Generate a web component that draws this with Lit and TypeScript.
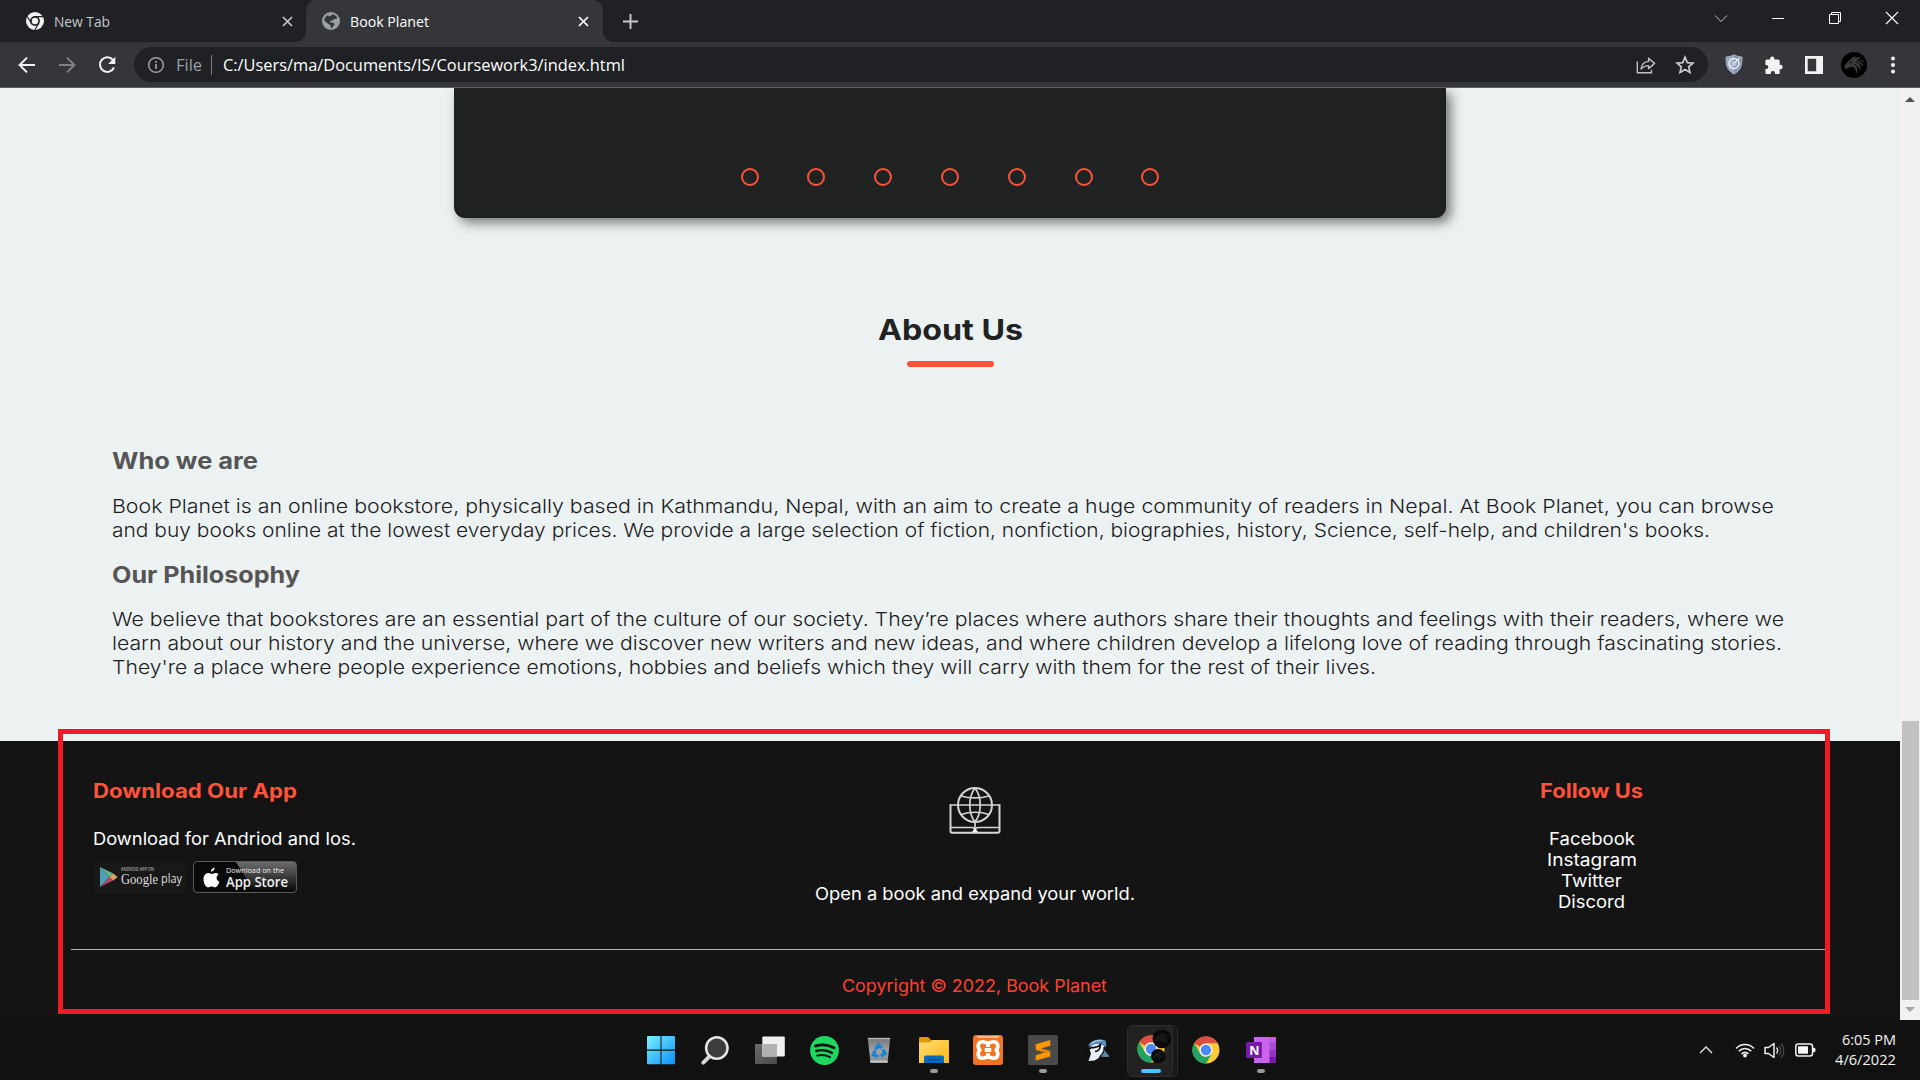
import { LitElement, html, svg, css, type TemplateResult } from "lit";
import { customElement, property, query } from "lit/decorators.js";

/** A single line of text stretched or condensed to an exact width. */
@customElement("fit-text")
class FitText extends LitElement {
  @property({ type: Number }) w = 100;
  @query(".line") line!: HTMLSpanElement;

  static styles = css`
    :host { display: block; white-space: nowrap; }
    .line { display: inline-block; transform-origin: 0 50%; }
  `;

  firstUpdated() {
    const natural = this.line.getBoundingClientRect().width;
    this.style.width = `${this.w}px`;
    if (natural > 0) this.line.style.transform = `scaleX(${this.w / natural})`;
  }

  render() {
    return html`<span class="line"><slot></slot></span>`;
  }
}

const icon = (w: number, h: number, body: TemplateResult) =>
  html`<svg class="icon" width=${w} height=${h} viewBox="0 0 ${w} ${h}" fill="none">${body}</svg>`;

const cross = (color: string) => icon(11, 11, svg`<path d="M1 1l9 9M10 1l-9 9" stroke=${color} stroke-width="1.7"/>`);

const chromeMono = icon(18, 18, svg`
  <circle cx="9" cy="9" r="9" fill="#f1f3f4"/>
  <circle cx="9" cy="9" r="4.900" fill="#202124"/><circle cx="9" cy="9" r="3.200" fill="#f1f3f4"/>
  <path d="M9 4.700h8.500M5.300 11.200L1.300 4.500M12.700 11.200L8.900 17.700" stroke="#202124" stroke-width="1.200"/>`);

const globeIcon = icon(18, 18, svg`
  <circle cx="9" cy="9" r="9" fill="#9aa0a6"/>
  <path d="M10.500 2.300c2 .3 3.900 1.600 4.900 3.600-.6.900-1.700 1-2.700 1-1.300 0-1.300 1.100-2.300 1.600-.9.400-2.400.2-2.600 1.200-.2.900.8.900 2 .9 1.600 0 2.700.8 2.700 2 0 1.300-1.700 1.400-1.900 2.400-.2.900-.9 1.300-1.800 1.300.2-1.200.1-2-.4-2.900-.5-.9-1.700-1.100-2.700-1.900L2.200 8.500C2.500 6 4 4 6 2.900c.3.900.9 1.500 1.900 1.400 1.200-.1 1.400-1.500 2.600-2z" fill="#35363a"/>`);

const backIcon = icon(20, 20, svg`<path d="M18 10H3M10 2.600L2.600 10l7.400 7.400" stroke="#f1f3f4" stroke-width="2"/>`);
const forwardIcon = icon(20, 20, svg`<path d="M2 10h15M10 2.600l7.400 7.400-7.400 7.400" stroke="#808185" stroke-width="2"/>`);
const reloadIcon = icon(20, 20, svg`
  <path d="M16.200 5.300A7.300 7.300 0 1 0 17 12.500" stroke="#f1f3f4" stroke-width="2"/>
  <path d="M18.300 1.700v7.200h-7.200z" fill="#f1f3f4"/>`);
const infoIcon = icon(18, 18, svg`
  <circle cx="9" cy="9" r="7.300" stroke="#9aa0a6" stroke-width="1.500"/>
  <path d="M9 8v5M9 5v1.700" stroke="#9aa0a6" stroke-width="1.700"/>`);
const shareIcon = icon(20, 18, svg`
  <path d="M1.300 5.500v11.300h14.200v-3" stroke="#bdc1c6" stroke-width="1.400"/>
  <path d="M5 13c.6-4.800 3.400-7.400 7.600-7.600V2.200l6 5.200-6 5.200V9.600c-3.200 0-5.400 1-7.600 3.400z" stroke="#bdc1c6" stroke-width="1.400" stroke-linejoin="round"/>`);
const starIcon = icon(20, 20, svg`
  <path d="M10 2.200l2.300 5.400 5.700.5-4.300 3.800 1.300 5.700-5-3-5 3 1.300-5.700L2 8.100l5.700-.5z" stroke="#c7cace" stroke-width="1.700"/>`);
const shieldIcon = icon(18, 21, svg`
  <path d="M9 .8c2.400 1.400 5 2 8 2.200 0 8-1 13.400-8 17C2 16.400 1 11 1 3c3-.2 5.600-.8 8-2.200z" fill="#8794ae" stroke="#aab4c6"/>
  <path d="M9 1.500V19C3 16 2 11 2 4c2.700-.2 5-1 7-2.500z" fill="#a3aec2"/>
  <circle cx="9" cy="9.500" r="4.900" stroke="#e9edf3" stroke-width="1.500"/><circle cx="9" cy="9.500" r="2.600" fill="#b9c4d6"/>
  <path d="M9.500 9l5-5" stroke="#e9edf3" stroke-width="1.300"/>`);
const puzzleIcon = icon(20, 20, svg`
  <path d="M8.200 1.500a2.200 2.200 0 0 1 2.200 2.200v.9h3.800a1.500 1.500 0 0 1 1.500 1.500v3.600h.7a2.250 2.250 0 0 1 0 4.500h-.7V18a1 1 0 0 1-1 1h-3.700v-.9a2.100 2.100 0 0 0-4.200 0v.9H2.600a1.200 1.200 0 0 1-1.200-1.200v-3.700h.8a2.100 2.100 0 0 0 0-4.200h-.8V6.100a1.500 1.500 0 0 1 1.500-1.500h3.200v-.9a2.200 2.200 0 0 1 2.100-2.200z" fill="#f1f3f4"/>`);
const panelIcon = icon(18, 18, svg`<path d="M0 0h18v18H0zM2.700 2.700v12.600h8.500V2.700z" fill="#f1f3f4" fill-rule="evenodd"/>`);

const dragon = (bg: string, ink: string) => svg`
  <circle cx="13" cy="13" r="13" fill=${bg}/>
  <path d="M3.500 13.500c2-1.300 3-4.300 5.500-5.800 1.700-1.200 3.200-3.300 6.500-3.700-1 1-1.600 1.600-1.700 2.300 2.500-1.300 5-1.500 7.200-.3-2-.1-3.600.5-4.700 1.600 2.900-.5 5.400.3 7 2.400-2-.8-4-.9-5.600-.2 2.600.6 4.600 2.500 5.300 5-1.500-1.500-3-2.500-5-2.600 1.500 1.600 2.400 4 1.900 6.600-.7-2-1.900-3.600-3.400-4.300.6 2.300.2 5.100-1.500 7.300.2-2.500-.4-4.600-1.900-6.100-1.100-1-2.900-1.300-4.500-.3L5.500 17l-2-1z" fill=${ink}/>
  <path d="M8.500 10.700l3-.7M13 12c2 1 3.500 2.600 4 5M15 9.500c2 .7 3.600 2 4.500 4M16 7.800l4 1.200" stroke=${bg} stroke-width=".9"/>`;
const avatarIcon = icon(26, 26, dragon("#000", "#3a3b3c"));
const dotsIcon = icon(6, 18, svg`<g fill="#f1f3f4"><circle cx="3" cy="2.500" r="2"/><circle cx="3" cy="9" r="2"/><circle cx="3" cy="15.500" r="2"/></g>`);

const bookGlobe = icon(52, 47, svg`
  <g stroke="#d6d3d1" stroke-width="1.700">
    <circle cx="26" cy="18" r="17" stroke-width="2"/>
    <path d="M26 35v9M1.500 18h49M12.200 9c8 2.500 19.600 2.500 27.600 0M12.200 27.500c8-3 19.600-3 27.600 0"/>
    <path d="M26 1c-7 9-7 25 0 34M26 1c7 9 7 25 0 34"/>
    <path d="M1.500 17.200V44c0 1 .8 1.800 1.800 1.800h45.400c1 0 1.800-.8 1.800-1.800V17.200" stroke-width="2"/>
    <path d="M2 40.500h20.500c2 0 3.500 1 3.500 3 0-2 1.500-3 3.500-3H50"/>
  </g><path d="M23 45h6l-3-4z" fill="#fff"/>`);

const playBadge = icon(18, 22, svg`
  <path d="M0 1v20L9.500 11z" fill="#4d9fb5"/><path d="M0 1l9.500 10 3.800-3.600z" fill="#67b68a"/>
  <path d="M0 21l9.500-10 3.800 3.600z" fill="#b04a63"/><path d="M13.300 7.400L9.500 11l3.800 3.600L17.600 11z" fill="#e0a060"/>`);
const appleIcon = icon(17, 21, svg`
  <path d="M11.600.5c.1 2.200-1.600 4.200-3.600 4.200C7.800 2.700 9.700.7 11.600.5zM15.600 7.400c-3 1.800-2.500 6 .9 7.300-.9 2.600-2.700 5.600-4.500 5.600-1.300 0-1.900-.8-3.400-.8s-2.200.8-3.400.8C2.700 20.300.5 16 .5 12.200c0-3.700 2.300-6.200 4.900-6.200 1.500 0 2.500.9 3.500.9 1 0 2.200-1 4-1 1.100 0 2.100.6 2.700 1.500z" fill="#fff"/>`);

const chromeColor = () => svg`
  <g>
    <circle cx="14" cy="14" r="13.500" fill="#fbc933"/>
    <path d="M2.300 7.250A13.500 13.500 0 0 1 25.700 7.250H14a6.750 6.750 0 0 0-5.850 3.400z" fill="#dd4f43"/>
    <path d="M2.300 7.250L8.150 17.400A6.750 6.750 0 0 0 14 20.750l5.850-3.350L14 27.500A13.500 13.500 0 0 1 2.300 7.250z" fill="#1fa463"/>
    <circle cx="14" cy="14" r="6.600" fill="#f5f6f7"/><circle cx="14" cy="14" r="5.200" fill="#4a8af4"/>
  </g>`;

const windowsIcon = icon(28, 28, svg`
  <defs><linearGradient id="wg" x1="0" y1="0" x2="28" y2="28" gradientUnits="userSpaceOnUse"><stop stop-color="#7cefff"/><stop offset="1" stop-color="#0a92f8"/></linearGradient></defs>
  <path d="M1 0h12.500v13.500H0V1a1 1 0 0 1 1-1zM14.500 0H27a1 1 0 0 1 1 1v12.500H14.500zM0 14.800h13.500V28.300H1a1 1 0 0 1-1-1zM14.500 14.800H28v12.500a1 1 0 0 1-1 1H14.500z" fill="url(#wg)"/>`);
const searchIcon = icon(28, 29, svg`
  <path d="M2.300 26.700l7-7" stroke="#d5d7da" stroke-width="4" stroke-linecap="round"/>
  <circle cx="15.800" cy="12" r="10.700" fill="#3b3c3e" stroke="#e4e5e7" stroke-width="2.500"/>`);
const taskViewIcon = icon(30, 28, svg`
  <defs><linearGradient id="tg" x1="0" y1="0" x2="1" y2="1"><stop stop-color="#6b6b6b"/><stop offset="1" stop-color="#494949"/></linearGradient></defs>
  <rect x="0" y="8" width="22" height="20" rx="1" fill="url(#tg)"/><rect x="7.300" y=".5" width="22.500" height="20" rx="1" fill="#f0f0f0"/>
  <path d="M7.300 8H22v12.500H7.300z" fill="#b2b2b2"/>`);
const spotifyIcon = icon(29, 29, svg`
  <circle cx="14.500" cy="14.500" r="14.400" fill="#1ed760"/>
  <g stroke="#121212" stroke-linecap="round"><path d="M5.500 10c6-1.800 13-1.200 18.500 1.800" stroke-width="2.900"/><path d="M6.300 15c5-1.500 11-.8 15.600 1.900" stroke-width="2.400"/><path d="M7 19.600c4.500-1.200 9-.7 13 1.600" stroke-width="2"/></g>`);
const binIcon = icon(24, 27, svg`
  <defs><linearGradient id="bg" x1="0" y1="0" x2="0" y2="1"><stop stop-color="#77797c"/><stop offset=".5" stop-color="#a0a3a7"/><stop offset="1" stop-color="#85888c"/></linearGradient></defs>
  <path d="M.8 1.500h22.400L20.500 26H3.500z" fill="url(#bg)"/><path d="M.8 1.500h22.400" stroke="#b9bcbf" stroke-width="1.300"/><path d="M3.300 24.500h17.400" stroke="#c4c7ca" stroke-width="2"/>
  <g stroke="#1585d8" stroke-width="3.400"><path d="M8.500 12.500l3-4.500L14.800 11"/><path d="M16 12.500l2 3.700-4 3"/><path d="M11 19.500l-4.500-1.500L8 13.500"/></g>`);
const folderIcon = icon(30, 27, svg`
  <defs><linearGradient id="fg" x1="0" y1="0" x2="1" y2="1"><stop stop-color="#ffdc73"/><stop offset="1" stop-color="#fdb913"/></linearGradient></defs>
  <path d="M0 1.500C0 .7.700 0 1.500 0H9l3.500 3.500V7H0z" fill="#dc9c08"/><path d="M0 5.500h10.500L13 3h16a1 1 0 0 1 1 1v22H0z" fill="url(#fg)"/>
  <path d="M5 26v-5.500c0-1.200.8-2 2-2h16c1.200 0 2 .8 2 2V26z" fill="#0f69b8"/><path d="M9 22.500h12" stroke="#0b4a86" stroke-width="1.300"/>`);
const xamppIcon = icon(30, 30, svg`
  <rect width="30" height="30" rx="3" fill="#f07423"/><path d="M3 1h24l-2 2H5z" fill="#fbb98a"/>
  <path d="M9.500 6.800C12 6.800 13 8 15 8s3-1.200 5.500-1.200c5 0 5.300 5.700 2.600 8.200 2.700 2.500 2.400 8.200-2.600 8.200-2.500 0-3.500-1.200-5.500-1.200s-3 1.200-5.500 1.200c-5 0-5.300-5.700-2.600-8.200-2.700-2.500-2.400-8.200 2.600-8.200z" stroke="#fff" stroke-width="3.600" stroke-linejoin="round"/>
  <path d="M11.700 15h6.600M15 7v5M15 18v5" stroke="#fff" stroke-width="4"/>`);
const sublimeIcon = icon(30, 30, svg`
  <rect width="30" height="30" rx="1.500" fill="#4a4a4a"/>
  <path d="M22.300 5v5.800L13 13.500l9.300 2.600v5.300L7.700 25.500v-5.300l9-2.800-9-2.600V9.300z" fill="#ff9800"/><path d="M7.700 14.800l14.600 1.300v1.600l-5.600-.3z" fill="#d97f00"/>`);
const jayIcon = icon(26, 23, svg`
  <path d="M18 8l7.500 9.500c-3 .8-7 .8-10.500-.5z" fill="#5f86ab"/>
  <path d="M8 4C13 .5 19 2 20 7c.4 5.500-3 11.500-9.500 14.500L4.500 22 7 14.500 5 9z" fill="#e9eef2"/>
  <path d="M4 6.500C7 1.500 14-1 21 1.200c1.500 2 1.500 4.500.5 7.300C19 5 13 4 8 6.500z" fill="#5c8fbd"/>
  <path d="M0 13l7.500-4.500M6 8c4 1.200 7.500.5 10.500-2.500-.3 4.500-2.500 7-5.500 7" stroke="#0c1116" stroke-width="1.700"/>
  <path d="M7 4.500c3-2.500 7-3.500 11-3" stroke="#a5c6e0" stroke-width="1.200"/><path d="M20 8c.5 4-1.500 7.500-4.500 10" stroke="#182838" stroke-width="1.300"/>`);
const chromeActive = icon(34, 30, svg`${chromeColor()}
  <g transform="translate(15.500 -5.500) scale(.72)">${dragon("#080808", "#1b1b1b")}</g>
  <g transform="translate(14 14) scale(.55)">${dragon("#080808", "#1b1b1b")}</g>`);
const chromeIcon = icon(28, 28, chromeColor());
const oneNoteIcon = icon(30, 26, svg`
  <path d="M8 0h22v26H8z" fill="#ca64ea"/><path d="M23.500 0H30v5h-6.500z" fill="#c55ce8"/><path d="M23.500 5H30v8h-6.500z" fill="#ae4bd5"/><path d="M23.500 13H30v7h-6.500z" fill="#9332bf"/><path d="M23.500 20H30v6h-6.500z" fill="#7719aa"/>
  <path d="M8 5h8v16H8z" fill="#8a37b3"/><rect x="0" y="5" width="15.500" height="16" rx="1.200" fill="#7719aa"/>
  <text x="3.200" y="17.700" font-family="Open Sans, sans-serif" font-weight="700" font-size="12.500" fill="#fff">N</text>`);

const chevronUp = icon(14, 8, svg`<path d="M1 7l6-6 6 6" stroke="#e6e6e6" stroke-width="1.400"/>`);
const wifiIcon = icon(20, 16, svg`
  <g stroke="#f0f0f0" stroke-width="1.600"><path d="M1 6.500c5-5.300 13-5.300 18 0"/><path d="M3.800 9.300c3.400-3.700 9-3.700 12.400 0"/><path d="M6.500 12c2-2.200 5-2.200 7 0"/></g><circle cx="10" cy="13.500" r="1.900" fill="#f0f0f0"/>`);
const soundIcon = icon(21, 17, svg`
  <path d="M1 5.500h3.500L10 1.500v14l-5.500-4H1z" stroke="#f0f0f0" stroke-width="1.500" stroke-linejoin="round"/>
  <path d="M12.500 5.500c1.300 1.700 1.300 4.300 0 6" stroke="#f0f0f0" stroke-width="1.300"/>
  <path d="M14.800 3.500c2.400 3 2.400 7 0 10M17.300 1.500c3.300 4 3.300 10 0 14" stroke="#4c4c4c" stroke-width="1.300"/>`);
const batteryIcon = icon(21, 14, svg`
  <rect x=".8" y="1" width="16.700" height="12" rx="2.500" stroke="#f0f0f0" stroke-width="1.500"/><rect x="3" y="3.200" width="10" height="7.600" rx=".8" fill="#f5f5f5"/><path d="M18 4.800h1.200c.8 0 1.300.7 1.300 2.200s-.5 2.200-1.300 2.200H18z" fill="#f0f0f0"/>`);

interface Task { art: TemplateResult; state?: "open" | "active" }
const tasks: Task[] = [
  { art: windowsIcon }, { art: searchIcon }, { art: taskViewIcon }, { art: spotifyIcon }, { art: binIcon },
  { art: folderIcon, state: "open" }, { art: xamppIcon }, { art: sublimeIcon, state: "open" }, { art: jayIcon },
  { art: chromeActive, state: "active" }, { art: chromeIcon }, { art: oneNoteIcon, state: "open" },
];

@customElement("app-root")
class AppRoot extends LitElement {
  static styles = css`
    :host { display: block; width: 1920px; height: 1080px; overflow: hidden; font-family: Inter, "Liberation Sans", sans-serif; }
    * { box-sizing: border-box; }
    h2, h3, h4, p { margin: 0; font: inherit; }
    .icon { display: block; flex: none; overflow: visible; }
    .screen { position: relative; display: flex; flex-direction: column; height: 1080px; }
    .ui { font-family: "Open Sans", "Noto Sans", sans-serif; }

    .tabs { display: flex; height: 42px; background: #202124; font-size: 14.800px; line-height: 20px; }
    .tab { display: flex; align-items: center; height: 42px; color: #c4c7cb; }
    .tab-new { width: 306px; padding: 0 13px 0 26px; }
    .tab-current { position: relative; width: 297px; padding: 0 14px 0 16px; background: #35363a; border-radius: 10px 10px 0 0; color: #fff; }
    .tab-current::before, .tab-current::after { content: ""; position: absolute; bottom: 0; width: 10px; height: 10px; }
    .tab-current::before { left: -10px; background: radial-gradient(circle at 0 0, transparent 9.500px, #35363a 10px); }
    .tab-current::after { right: -10px; background: radial-gradient(circle at 100% 0, transparent 9.500px, #35363a 10px); }
    .tab-title { margin: 0 auto 0 10px; }
    .plus { display: flex; align-items: center; margin-left: 20px; }
    .window { display: flex; align-items: center; height: 36px; margin: 0 22px 0 auto; gap: 45px; }

    .toolbar { display: flex; align-items: center; height: 46px; padding-left: 7px; background: #35363a; border-bottom: 1px solid #5c5d60; }
    .slot { display: flex; align-items: center; justify-content: center; width: 40px; }
    .slot-last { width: 38px; }
    .address { display: flex; align-items: center; width: 1574px; height: 35px; margin: 0 6px 0 7px; padding: 0 13px; border-radius: 18px; background: #202124; color: #fff; font-size: 17px; line-height: 24px; }
    .scheme { margin-left: 10.500px; color: #9aa0a6; }
    .bar { width: 1.500px; height: 20px; margin: 0 11px 0 9px; background: #7b7e82; }
    .address-end { display: flex; align-items: center; gap: 19px; margin-left: auto; }

    .viewport { display: flex; height: 932px; }
    .page { display: flex; flex-direction: column; width: 1900px; background: #ecf2f2; overflow: hidden; }
    .card { display: flex; align-items: flex-end; justify-content: center; gap: 48.800px; width: 992px; height: 130px; flex: none; margin-left: 454px; padding-bottom: 32px; border-radius: 0 0 11px 11px; background: #212322; box-shadow: 5px 5px 12px rgba(0, 0, 0, .5), inset -3px -3px 6px rgba(0, 0, 0, .1); }
    .dot { width: 18px; height: 18px; border: 2px solid #ff523b; border-radius: 50%; }
    .about-title { display: flex; flex-direction: column; align-items: center; margin-top: 94px; font-size: 29px; font-weight: 650; line-height: 36px; color: #212322; }
    .underline { width: 87px; height: 6px; margin-top: 13px; border-radius: 3px; background: #ff523b; }
    .about { display: flex; flex-direction: column; margin: 80px 0 0 111.500px; }
    .about-head { font-size: 22.500px; font-weight: 650; line-height: 28px; color: #555; }
    .about-text { margin: 19px 0; font-size: 19.200px; font-weight: 300; line-height: 24px; color: #1c1c1e; }
    .about-text-last { margin-top: 18px; }

    .footer { display: flex; flex-direction: column; height: 279px; margin-top: auto; flex: none; background: #141414; color: #fff; font-size: 17.300px; line-height: 21px; }
    .columns { display: grid; grid-template-columns: 501px 762px 471px; height: 208px; padding: 38px 0 0 93px; }
    .col { display: flex; flex-direction: column; }
    .col-mid { align-items: center; }
    .foot-head { margin-bottom: 25px; font-size: 19.500px; font-weight: 700; line-height: 24px; color: #ff523b; }
    .logo { margin: 8px 0 49px -1px; }
    .badges { display: flex; gap: 7px; margin-top: 12px; color: #ddd; }
    .badge { display: flex; align-items: center; height: 32px; border-radius: 4px; }
    .play { width: 93px; padding-left: 7px; gap: 3px; background: #181818; }
    .apple { width: 104px; padding-left: 9px; gap: 6px; border: 1px solid #5a5a5a; background: linear-gradient(to bottom, transparent, #0b0b0b 95%), linear-gradient(58deg, transparent 50%, #6c6c6c 50.500%), #080808; color: #f1f1f1; }
    .badge-text { display: flex; flex-direction: column; }
    .play .badge-text { margin-top: -3px; }
    .tiny { font: 600 5px/6px "Open Sans", sans-serif; color: #a8a8a8; }
    .google { display: flex; gap: 3px; font: 15px/14px "Liberation Serif", serif; }
    .play-word { font: 12.500px/14px "Open Sans", sans-serif; }
    .small { font: 7.500px/8px "Open Sans", sans-serif; }
    .store { font: 600 14.500px/15px "Open Sans", sans-serif; }
    .rule { height: 1px; margin: 0 75px 0 71px; background: #b3b3b3; }
    .copyright { display: flex; justify-content: center; margin: 25px 0 0 49px; color: #ff412f; }

    .scroll { display: flex; flex-direction: column; align-items: center; width: 20px; background: #f1f1f1; }
    .up { margin-top: 9px; }
    .thumb { width: 17px; height: 279px; margin: 619px 0 7px 1px; background: #c1c1c1; }
    .frame { position: absolute; left: 58px; top: 729px; width: 1772px; height: 285px; border: 5px solid #ed1c24; }

    .taskbar { display: flex; align-items: center; height: 60px; padding: 0 24px 0 633.500px; background: linear-gradient(#121212, #111); }
    .task { display: flex; align-items: center; justify-content: center; position: relative; width: 54.550px; height: 60px; }
    .task-active::before { content: ""; position: absolute; left: 3px; top: 5px; width: 49px; height: 50px; border: 1px solid #2c2c2c; border-radius: 6px; background: #191919; }
    .task-active::after { content: ""; position: absolute; left: 3px; top: 5px; width: 44px; height: 50px; border: 1px solid #2e2e2e; border-radius: 6px; background: #222; }
    .task-active .icon, .task-active .mark { z-index: 1; }
    .task-active .icon { position: relative; left: 2.500px; }
    .mark { position: absolute; bottom: 7px; width: 8px; height: 4px; border-radius: 2px; background: #9a9a9a; }
    .mark-active { left: 17px; width: 20px; background: #4cc2ff; }
    .tray { display: flex; align-items: center; gap: 9.500px; margin-left: auto; color: #f2f2f2; }
    .tray-first { margin-right: 12.500px; }
    .clock { display: flex; flex-direction: column; align-items: flex-end; width: 71px; margin-top: -2px; font-size: 15px; line-height: 20px; }
  `;

  render() {
    return html`
      <div class="screen">
        <div class="tabs ui">
          <div class="tab tab-new">${chromeMono}<fit-text class="tab-title" w="56">New Tab</fit-text>${cross("#c4c7cb")}</div>
          <div class="tab tab-current">${globeIcon}<fit-text class="tab-title" w="79">Book Planet</fit-text>${cross("#fff")}</div>
          <div class="plus">${icon(15, 15, svg`<path d="M7.500 0v15M0 7.500h15" stroke="#c8cbcf" stroke-width="1.900"/>`)}</div>
          <div class="window">
            ${icon(12, 7, svg`<path d="M0 .5l6 6 6-6" stroke="#c4c4c4" stroke-width="1"/>`)}
            ${icon(12, 12, svg`<path d="M0 6.500h12" stroke="#fff"/>`)}
            ${icon(12, 12, svg`<path d="M.5 2.500h9v9h-9zM2.500 2.500v-2h9v9h-2" stroke="#fff"/>`)}
            ${icon(12, 12, svg`<path d="M0 0l12 12M12 0L0 12" stroke="#fff" stroke-width="1.100"/>`)}
          </div>
        </div>
        <div class="toolbar ui">
          <div class="slot">${backIcon}</div><div class="slot">${forwardIcon}</div><div class="slot">${reloadIcon}</div>
          <div class="address">
            ${infoIcon}<fit-text class="scheme" w="26">File</fit-text><div class="bar"></div>
            <fit-text w="402">C:/Users/ma/Documents/IS/Coursework3/index.html</fit-text>
            <div class="address-end">${shareIcon}${starIcon}</div>
          </div>
          <div class="slot">${shieldIcon}</div><div class="slot">${puzzleIcon}</div><div class="slot">${panelIcon}</div>
          <div class="slot">${avatarIcon}</div><div class="slot slot-last">${dotsIcon}</div>
        </div>

        <div class="viewport">
          <div class="page">
            <div class="card">${Array.from({ length: 7 }, () => html`<div class="dot"></div>`)}</div>
            <h2 class="about-title"><fit-text w="145">About Us</fit-text><div class="underline"></div></h2>
            <div class="about">
              <h3 class="about-head"><fit-text w="146">Who we are</fit-text></h3>
              <p class="about-text">
                <fit-text w="1662">Book Planet is an online bookstore, physically based in Kathmandu, Nepal, with an aim to create a huge community of readers in Nepal. At Book Planet, you can browse</fit-text>
                <fit-text w="1598">and buy books online at the lowest everyday prices. We provide a large selection of fiction, nonfiction, biographies, history, Science, self-help, and children's books.</fit-text>
              </p>
              <h3 class="about-head"><fit-text w="188">Our Philosophy</fit-text></h3>
              <p class="about-text about-text-last">
                <fit-text w="1672">We believe that bookstores are an essential part of the culture of our society. They’re places where authors share their thoughts and feelings with their readers, where we</fit-text>
                <fit-text w="1670">learn about our history and the universe, where we discover new writers and new ideas, and where children develop a lifelong love of reading through fascinating stories.</fit-text>
                <fit-text w="1264">They're a place where people experience emotions, hobbies and beliefs which they will carry with them for the rest of their lives.</fit-text>
              </p>
            </div>
            <div class="footer">
              <div class="columns">
                <div class="col">
                  <h4 class="foot-head"><fit-text w="204">Download Our App</fit-text></h4>
                  <fit-text w="263">Download for Andriod and Ios.</fit-text>
                  <div class="badges">
                    <div class="badge play">${playBadge}
                      <div class="badge-text"><fit-text class="tiny" w="33">ANDROID APP ON</fit-text>
                        <div class="google"><fit-text w="37">Google</fit-text><fit-text class="play-word" w="21">play</fit-text></div></div>
                    </div>
                    <div class="badge apple">${appleIcon}
                      <div class="badge-text"><fit-text class="small" w="58">Download on the</fit-text><fit-text class="store" w="62">App Store</fit-text></div>
                    </div>
                  </div>
                </div>
                <div class="col col-mid"><div class="logo">${bookGlobe}</div><fit-text w="320">Open a book and expand your world.</fit-text></div>
                <div class="col col-mid">
                  <h4 class="foot-head"><fit-text w="103">Follow Us</fit-text></h4>
                  <fit-text w="86">Facebook</fit-text><fit-text w="90">Instagram</fit-text><fit-text w="61">Twitter</fit-text><fit-text w="67">Discord</fit-text>
                </div>
              </div>
              <div class="rule"></div>
              <div class="copyright"><fit-text w="265">Copyright © 2022, Book Planet</fit-text></div>
            </div>
          </div>
          <div class="scroll">
            <div class="up">${icon(10, 5, svg`<path d="M0 5l5-5 5 5z" fill="#505050"/>`)}</div>
            <div class="thumb"></div>
            ${icon(10, 5, svg`<path d="M0 0l5 5 5-5z" fill="#a3a3a3"/>`)}
          </div>
        </div>

        <div class="taskbar ui">
          ${tasks.map((t) => html`
            <div class="task ${t.state === "active" ? "task-active" : ""}">${t.art}
              ${t.state ? html`<div class="mark ${t.state === "active" ? "mark-active" : ""}"></div>` : ""}
            </div>`)}
          <div class="tray">
            <div class="tray-first">${chevronUp}</div>${wifiIcon}${soundIcon}${batteryIcon}
            <div class="clock"><fit-text w="54">6:05 PM</fit-text><fit-text w="61">4/6/2022</fit-text></div>
          </div>
        </div>
        <div class="frame"></div>
      </div>`;
  }
}
